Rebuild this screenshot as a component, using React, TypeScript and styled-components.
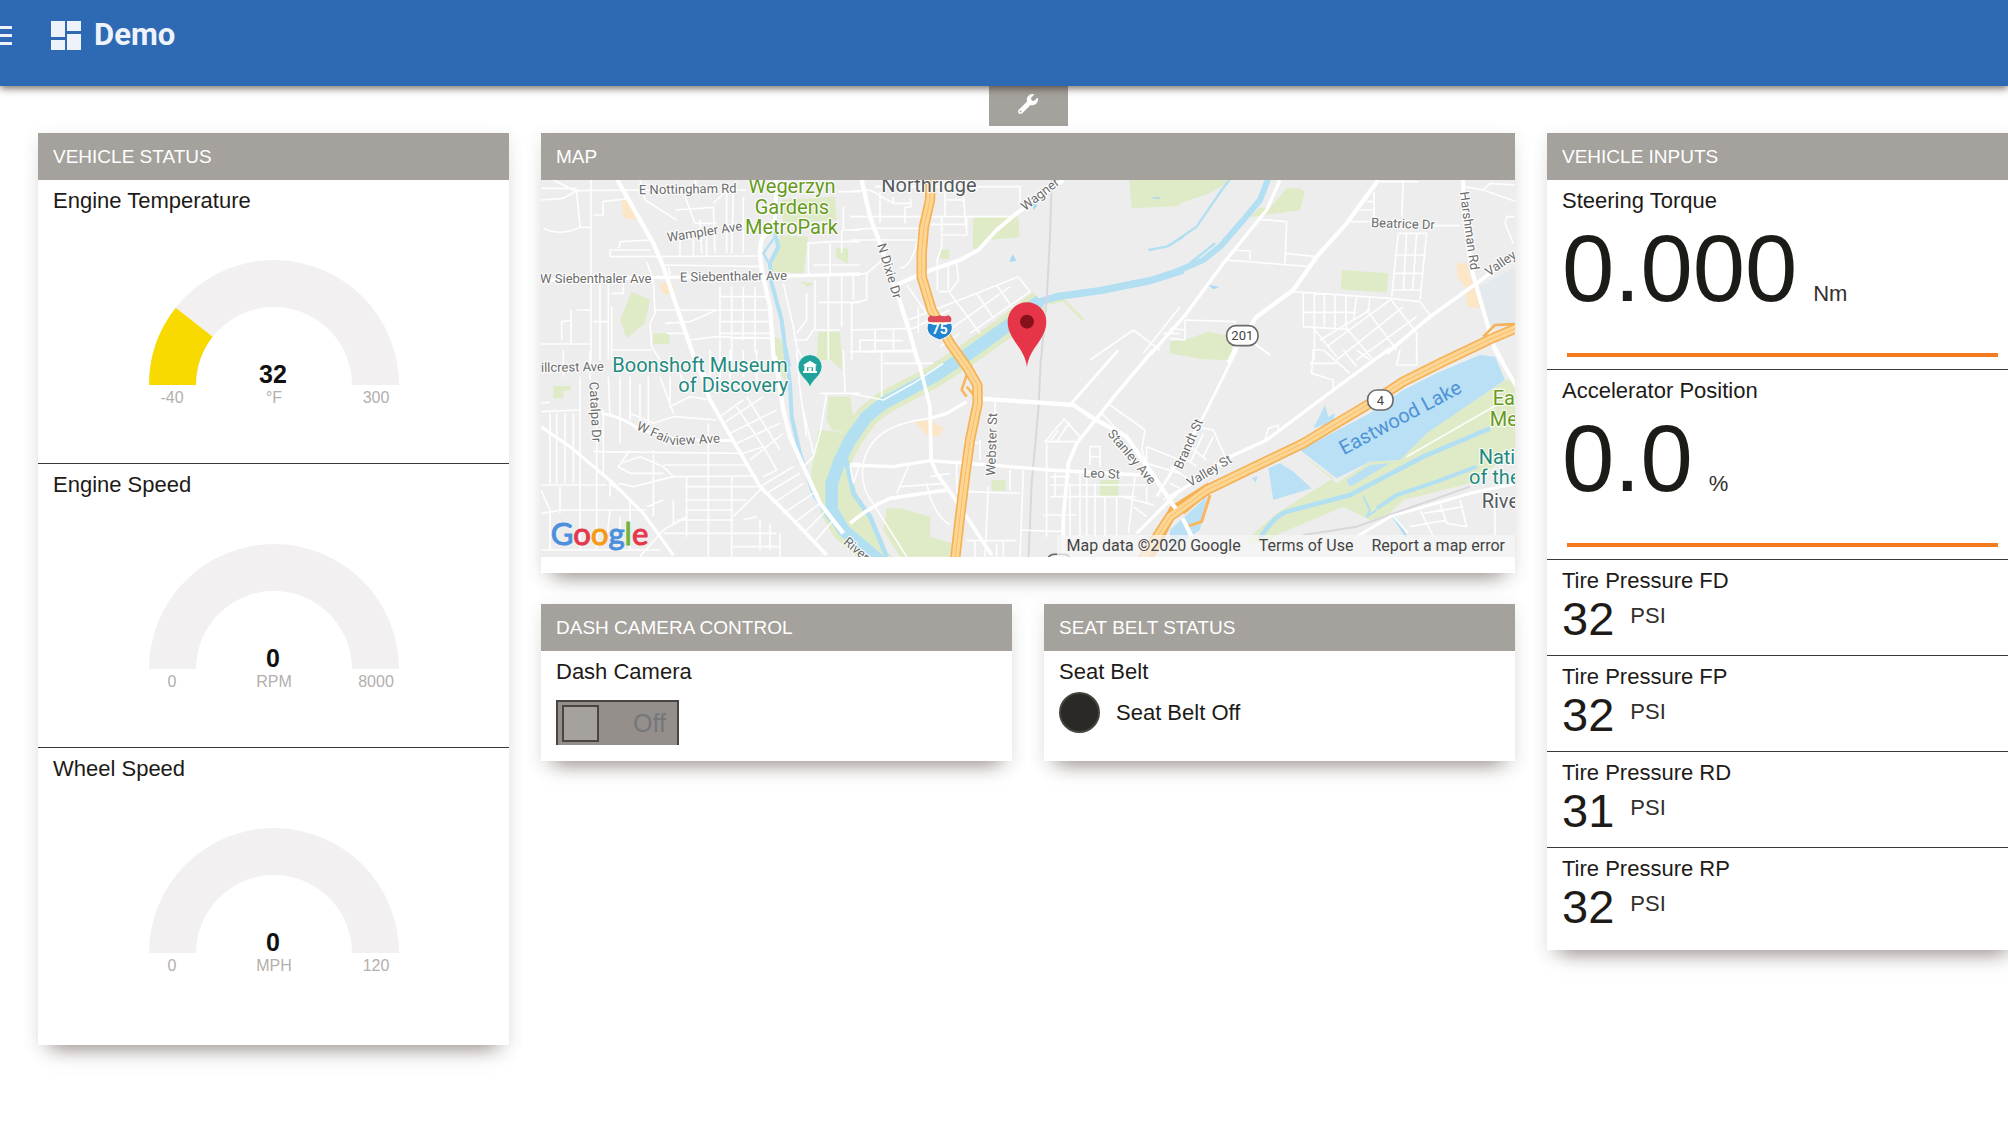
import React, { useId, useState } from "react";
import styled, { createGlobalStyle } from "styled-components";
import { FaWrench } from "react-icons/fa";

const sans = '"Liberation Sans", Arial, Helvetica, sans-serif';
const roboto = 'Roboto, "Liberation Sans", sans-serif';

const GlobalStyle = createGlobalStyle`
  *, *::before, *::after { box-sizing: border-box; }
  body {
    margin: 0;
    background: #fff;
    color: #1d1b18;
    font-family: ${sans};
    overflow-x: hidden;
  }
`;

const Page = styled.div`
  min-height: 100vh;
  overflow: hidden;
`;

const TopBar = styled.header`
  position: relative;
  z-index: 1;
  display: flex;
  align-items: flex-start;
  height: 86px;
  padding-top: 16px;
  background: #2e6ab3;
  box-shadow: 0 2px 8px rgba(60, 45, 35, 0.75);
`;

const MenuButton = styled.button`
  display: block;
  width: 38px;
  height: 38px;
  margin: 0 29px 0 -21px;
  padding: 0;
  border: 0;
  background: none;
  color: #eef3fb;
`;

const Brand = styled.h1`
  display: flex;
  align-items: center;
  gap: 8px;
  height: 38px;
  margin: 0;
  color: #eef3fb;
  font: 700 31px/40px ${roboto};
`;

const SettingsTab = styled.button`
  display: flex;
  align-items: center;
  justify-content: center;
  width: 79px;
  height: 40px;
  margin: 0 auto 7px;
  padding: 0 0 4px;
  border: 0;
  background: #a5a19c;
  color: #fff;
  font-size: 20px;
`;

const Board = styled.main`
  display: flex;
  flex-direction: column;
  margin: 0 -10px 0 38px;
`;

const Grid = styled.div`
  display: grid;
  grid-template-columns: repeat(4, 1fr);
  gap: 32px;
  align-items: start;
`;

const Middle = styled.div`
  grid-column: span 2;
  display: grid;
  grid-template-columns: repeat(2, 1fr);
  gap: 31px 32px;
`;

const CardBox = styled.section<{ $wide?: boolean }>`
  grid-column: ${(p) => (p.$wide ? "1 / -1" : "auto")};
  min-width: 0;
  padding-bottom: 16px;
  background: #fff;
  box-shadow: 0 18px 18px -14px rgba(80, 62, 55, 0.5), 0 4px 16px rgba(60, 50, 45, 0.12);
`;

const CardTitle = styled.h2`
  height: 47px;
  margin: 0;
  padding: 0 15px;
  background: #a5a19c;
  color: #fff;
  font: 400 19px/47px ${sans};
  text-transform: uppercase;
`;

const Row = styled.div<{ $height: number }>`
  display: flex;
  flex-direction: column;
  min-height: ${(p) => p.$height}px;
  padding: 8px 15px 0;
  border-bottom: 1px solid #3d3835;

  &:last-child {
    min-height: 0;
    border-bottom: 0;
  }
`;

const RowLabel = styled.div`
  font-size: 22px;
  line-height: 26px;
  white-space: nowrap;
`;

const GaugeSvg = styled.svg`
  display: block;
  align-self: center;
  width: 252px;
  height: 160px;
  margin: 45px 0 42px;
`;

const GaugeValue = styled.text`
  fill: #111;
  font: 700 25px ${sans};
  text-anchor: middle;
`;

const GaugeNote = styled.text`
  fill: #b3afad;
  font: 400 16px ${sans};
  text-anchor: middle;
`;

const Reading = styled.div<{ $big?: boolean }>`
  display: flex;
  align-items: baseline;
  gap: 16px;
  margin-bottom: 2px;
  font-size: ${(p) => (p.$big ? 94 : 47)}px;
  line-height: ${(p) => (p.$big ? 110 : 50)}px;
`;

const Unit = styled.span<{ $raised?: boolean }>`
  align-self: ${(p) => (p.$raised ? "flex-start" : "baseline")};
  color: #33302d;
  font-size: 22px;
  line-height: ${(p) => (p.$raised ? 44 : 26)}px;
`;

const Trend = styled.svg`
  display: block;
  width: calc(100% - 10px);
  height: 4px;
  margin: 27px 5px 0;
`;

const MapFrame = styled.div`
  position: relative;
  height: 377px;
  overflow: hidden;
  background: #ededed;
`;

const MapSvg = styled.svg`
  display: block;
  width: 100%;
  height: 100%;
  font-family: ${roboto};
`;

const MapText = styled.text<{ $size: number; $color: string }>`
  fill: ${(p) => p.$color};
  font-size: ${(p) => p.$size}px;
  stroke: rgba(255, 255, 255, 0.85);
  stroke-width: 7px;
  stroke-linejoin: round;
  paint-order: stroke;
`;

const LogoText = styled.text`
  font: 400 93px Lato, sans-serif;
  stroke-width: 3px;
`;

const Attribution = styled.div`
  position: absolute;
  right: 0;
  bottom: 0;
  display: flex;
  gap: 18px;
  padding: 0 10px 0 9px;
  background: rgba(245, 245, 245, 0.75);
  color: #444;
  font: 400 16px/22px ${roboto};

  a { color: inherit; text-decoration: none; }
`;

const SwitchLabel = styled.label`
  display: flex;
  align-items: center;
  justify-content: space-between;
  width: 123px;
  height: 45px;
  margin-top: 15px;
  padding: 0 11px 0 4px;
  border: 2px solid #4b4542;
  border-bottom: 0;
  background: #948f8a;
  color: #74777a;
  font-size: 25px;
`;

const SwitchKnob = styled.input`
  appearance: none;
  width: 37px;
  height: 37px;
  margin: 0;
  border: 2px solid #4b4542;
  background: #a5a19c;
`;

const Indicator = styled.div`
  display: flex;
  align-items: center;
  gap: 16px;
  margin-top: 7px;
  font-size: 22px;
  line-height: 26px;
`;

const Lamp = styled.span`
  width: 41px;
  height: 41px;
  border: 2px solid #46443f;
  border-radius: 50%;
  background: #2a2925;
`;

function Card({ title, wide, children }: { title: string; wide?: boolean; children: React.ReactNode }) {
  return (
    <CardBox $wide={wide}>
      <CardTitle>{title}</CardTitle>
      <div>{children}</div>
    </CardBox>
  );
}

function arc(from: number, to: number) {
  const point = (r: number, t: number) => {
    const a = Math.PI * (1 - t);
    return `${126 + r * Math.cos(a)} ${126 - r * Math.sin(a)}`;
  };
  return `M${point(125, from)} A125 125 0 0 1 ${point(125, to)} L${point(78, to)} A78 78 0 0 0 ${point(78, from)} Z`;
}

function Gauge({ label, value, min, max, unit }: { label: string; value: number; min: number; max: number; unit: string }) {
  const share = (value - min) / (max - min);
  return (
    <Row $height={284}>
      <RowLabel>{label}</RowLabel>
      <GaugeSvg viewBox="0 0 252 160">
        <path d={arc(0, 1)} fill="#f2f0f1" />
        {share > 0 && <path d={arc(0, share)} fill="#f8da00" />}
        <GaugeValue x="125" y="124">{value}</GaugeValue>
        <GaugeNote x="24" y="144">{min}</GaugeNote>
        <GaugeNote x="126" y="144">{unit}</GaugeNote>
        <GaugeNote x="228" y="144">{max}</GaugeNote>
      </GaugeSvg>
    </Row>
  );
}

function TrendReading({ label, value, unit }: { label: string; value: string; unit: string }) {
  return (
    <Row $height={190}>
      <RowLabel>{label}</RowLabel>
      <Reading $big>
        {value}
        <Unit>{unit}</Unit>
      </Reading>
      <Trend viewBox="0 0 100 4" preserveAspectRatio="none">
        <path d="M0 2H100" stroke="#f47a20" strokeWidth="4" />
      </Trend>
    </Row>
  );
}

/* Map artwork is drawn at three units per pixel, split into six tiles. */
type Tile = {
  x: number;
  y: number;
  green?: string;
  commercial?: string;
  lake?: string;
  streams?: [string, number][];
  rail?: string;
  minor: string;
  major: [string, number][];
};

const tiles: Tile[] = [
  {
    x: -33,
    y: -180,
    green:
      "M750 240L915 230L920 300L760 310Z M750 345L835 350L820 460L720 455L740 400Z M305 515L360 540L345 610L290 655L270 600Z M370 640H418V672H370Z M918 385H955L953 432L918 412Z M810 485L850 490L835 502Z M865 635H930L935 720H860Z M735 650L755 660L770 720H735Z",
    commercial: "M275 235L300 240L330 290L315 300L278 295Z M392 490L425 485L435 510L410 525L392 515Z",
    streams: [["M742 180L735 340L745 380L720 430L725 490L755 600L765 680L778 740", 12], ["M735 350L700 400L722 440", 7]],
    minor:
      "M33 240L100 235L140 212L330 210H650 M70 180L140 215L150 320 M40 325Q90 350 150 322H183 M183 180V720 M33 205H140 M190 285H220L218 245L300 235 M240 410V390H360 M240 410L700 408 M265 385L272 365L360 360 M400 435L700 440 M420 465L415 440 M435 270L550 262L555 400 M465 230L495 310H560 M510 300L515 400 M590 210V400 M610 220L605 400 M640 230V400 M450 350V405 M490 360V405 M530 350V405 M350 425L370 480L375 580L360 610L365 680L390 720 M375 570L720 570 M405 610L480 605L560 570 M570 500V720 M605 500V720 M640 500V660 M675 500V700 M570 530H715 M570 605H720 M570 640H725 M480 660L560 650L725 655 M95 660V605L125 600 M123 570V670 M140 570H183 M33 672H183 M210 490V720 M235 490V720 M190 605H235 M245 520H280V490 M245 560V720 M245 690H365 M410 640H470 M760 490L790 620L800 680L820 720 M830 520V600L800 640 M855 480V630 M895 470V720 M935 470V620 M865 547H990 M830 370L900 365H990 M835 370V470 M850 435H990 M900 370V460 M935 330V400 M970 290H990 M940 260V330H990 M925 215H990 M790 660H830L850 630H930 M965 550V720 M495 180L500 200 M330 180L345 240L440 300 M550 250L590 210",
    major: [["M262 180L370 370L400 440L440 560L495 720", 13], ["M740 180L735 300L700 350Q688 370 690 410L695 450L720 560L732 730", 13], ["M33 482L380 472L700 470L990 462", 10]],
  },
  {
    x: 927,
    y: -180,
    green: "M370 290H505L508 352L410 360L385 388H368Z M268 388H298V418L268 415Z M838 180H990V258L845 265Z",
    streams: [["M895 390L950 380L1000 350", 7], ["M1000 450L900 482L750 512L620 530L560 548", 22]],
    rail: "M605 180L600 350L590 540L573 720",
    minor:
      "M0 215L60 210L130 250 M75 200H510V250 M0 290H480 M0 330L60 325H210 M0 360H200 M180 235L185 260L165 262V310 M90 215V310 M130 230V250H180 M275 290V380L262 420V510 M220 313H350 M350 290V345H275 M340 230L350 340 M285 200V290 M285 240H340 M320 430L325 480L300 515H265 M295 430V510 M150 445Q190 440 210 330 M0 465L50 460L110 410 M50 460V540L0 550 M10 465V540 M175 600L380 520L505 470L540 515L360 640 M380 520L430 595 M300 520L390 640 M440 495L485 560 M190 625L300 570 M270 650L480 500 M270 680L330 640 M0 630L190 625 M30 660L160 662 M30 695L190 690 M75 630V700 M30 660V695 M130 630V690 M720 720L850 630L930 690 M990 560L880 700 M940 640H990 M205 560V640 M170 495L230 580",
    major: [["M35 180L60 290L90 370L145 530L180 640L205 730", 13], ["M640 180L500 280L440 330L385 390L330 420L215 460L130 500", 12]],
  },
  {
    x: 1887,
    y: -180,
    green:
      "M0 180H185L120 220L0 260Z M350 205H390L405 215L390 270L240 292L270 262L300 265Z M515 450L655 460L650 518L513 508Z M0 665L60 655L115 635L190 650L180 720L100 718L0 700Z",
    commercial: "M860 430H890L905 480L935 540L930 565L890 560L885 500L862 470Z",
    streams: [["M295 175L270 240L220 300L150 380L100 420L-5 465", 18], ["M178 180L155 210L80 320L-5 378", 7], ["M135 370L60 430", 8]],
    minor:
      "M270 298L350 305L345 430 M345 400L440 410 M170 420L420 440 M190 390L240 393V420 M540 305H605 M790 317H870 M570 270H612V215 M590 245H612 M612 270V300 M700 180L695 290 M630 185H745 M685 340H770L750 540 M685 340L665 530 M710 340L700 510 M740 340L728 510 M675 405H765 M670 460H758 M668 510H750 M370 515L660 535L750 545 M400 520V620L530 628 M433 520V720 M463 525V625 M495 525V625 M528 528V625 M560 530L550 600 M400 577H560 M600 530L595 570 M450 660L600 570 M470 680L660 540 M500 720L700 560 M560 720L740 590 M430 625L500 710 M530 625L610 720 M590 570L680 690 M660 535L740 640 M750 545L780 585 M740 640V720 M425 690H460 M45 600L200 605 M45 600V660L0 655 M0 625L45 630 M880 200L940 210L1040 245 M940 210L960 190L1034 195 M1034 290H1010L1005 310L1030 370 M240 660L300 705",
    major: [["M625 180L530 310L440 410L370 510L260 590L200 680L175 730", 13], ["M330 180L290 270L160 430L50 580L-60 705", 10], ["M1040 400L920 490L780 590L650 700", 11]],
  },
  {
    x: -33,
    y: 510,
    green:
      "M895 140H960L970 200L945 245L905 240L890 210Z M865 240L930 245L890 480L840 390Z M740 0H760L770 100L745 60Z M885 0H935V60L890 20Z M70 108H122V122H100V145H70Z",
    streams: [["M765 0L780 100L785 200L810 310L850 430L900 510L990 580", 12]],
    minor:
      "M33 185L150 180 M33 158H60 M150 80V600 M33 405H230 M60 190V400 M80 190V400 M105 190V400 M130 190V400 M200 180V600 M220 180V380 M190 305L640 310 M235 80L240 200 M270 80V280 M300 80V210 M330 100V240 M355 80V240 M420 80V170L480 140L540 150 M390 80L430 190 M450 70L470 130 M300 190L370 220L430 200L560 210 M510 60L545 90 M370 300V500 M270 340L330 320L400 350L430 380L310 410L265 400 M300 300L265 350L300 370H400 M470 380V560 M535 220V620 M605 380V620 M430 380L680 378 M400 345H650 M465 410H690 M465 450H650 M465 480H610 M440 510H610 M400 550H740 M610 500L700 410 M610 590H750 M330 620L400 540L470 500 M570 200L640 150 M580 220L700 140 M600 250L740 180 M620 280L750 220 M640 310L700 290L740 360L700 380 M660 330L760 250 M690 410L790 350 M710 430L810 370 M730 460L820 400 M760 490L850 430 M790 520L870 460 M820 550L890 480 M850 580L910 510 M620 170L700 290 M650 140L750 300 M240 440V400L265 420 M90 410V490 M33 490L100 480H350 M270 500V600 M300 450V600 M33 600H390 M240 480L230 570 M430 450V520 M400 450L350 470 M33 420L60 480V600 M690 510V600 M720 520V600 M750 550V620 M640 510L680 500 M890 130L870 250L850 320L820 350 M870 130H990 M820 180L850 310 M800 0L810 120L830 260 M940 0L945 130 M680 0V90 M640 0V80 M600 0V90 M570 0V90 M540 0V90 M100 0V80 M180 0V90 M965 340H990L970 400",
    major: [["M495 20L540 150L620 290L690 410L790 510L890 615", 11], ["M735 20L760 180L780 260L830 370L870 460L940 550", 13], ["M33 230L120 290L250 400L340 490L430 615", 9], ["M215 190Q280 200 330 240L450 270L610 272", 8]],
  },
  {
    x: 927,
    y: 510,
    green:
      "M110 475H150L240 500V560L305 580L300 620H150L100 540Z M-30 300L0 360L30 460L100 570L60 600L-10 540L-30 450Z M425 390H467V422H425Z M750 390H805V440H750Z",
    commercial: "M190 215L240 210L280 235L270 258L230 255Z",
    streams: [["M-12 330L10 430L60 500L110 620", 14]],
    rail: "M573 20L565 180L545 400L535 640",
    minor:
      "M0 130L100 150L190 100L280 40 M95 0V140 M0 5H200 M100 40H250 M240 205Q100 220 60 290Q20 350 50 430L170 620 M435 150V230 M415 410L405 620 M390 270V330 M340 275L385 280 M350 425L510 430 M520 360L510 620 M350 572H500 M480 360V420 M440 580V620 M375 575V620 M460 575V620 M510 540L640 545 M590 370V560 M615 370V440 M690 370V560 M710 370V560 M735 400V560 M765 440V560 M800 440V560 M660 400V560 M855 380L835 550 M890 410V460 M600 405H890 M600 440H860 M580 495H680 M600 380H660 M820 440L910 465 M850 470L890 500 M640 210L585 275H680 M625 240L600 275 M660 215L620 275 M640 205L690 260 M590 280V370 M755 190L860 300 M780 165L885 240L875 300L890 340 M890 290L990 330 M890 290V340L990 370 M720 345V290H750V350 M720 320H750 M990 420L940 450 M140 430L175 350 M230 400L240 440Q260 500 300 525 M150 410L290 400 M320 340V430 M240 380L300 370 M0 345L10 400",
    major: [["M205 30L240 170L243 330L260 370L310 440L425 615", 11], ["M0 520Q60 470 120 445L290 420", 11], ["M240 205L290 190L350 155", 10], ["M390 146L560 157L670 165L730 205L830 260L960 450", 13], ["M0 345L130 350L240 332L420 345L600 360L870 375", 10], ["M910 0L800 130L680 280L655 340L640 500V620", 11], ["M805 0L660 165", 8], ["M990 420L860 550", 10]],
  },
  {
    x: 1887,
    y: 510,
    green:
      "M390 310L490 385L320 490L240 560L230 580H290L330 550L520 470L600 510L650 500L700 450L900 400L1040 300V80L1010 90L770 240L690 330L600 335L500 400Z M0 0H190L175 28L100 18L0 8Z",
    lake:
      "M390 300L500 385L600 335L690 330L770 250L1005 90L975 20L930 15L800 70L700 120L600 190Z M295 355L330 340L370 365L425 415L310 450Z M440 215L465 165L475 200L495 190L490 215L430 235Z M530 390L600 345L660 340L540 410Z M245 385L262 378L258 398Z M0 540L110 440L90 540L0 600Z",
    streams: [["M270 565Q310 500 350 485L540 435L760 320L960 235", 14], ["M620 475L680 435L800 395L920 350", 12], ["M580 440L600 480L590 500L620 480", 6], ["M670 500L710 560", 8]],
    rail: "M400 555L560 530L700 480L900 410",
    minor:
      "M710 320L980 165 M670 500L715 550 M750 480L790 560 M810 460L830 520L890 530L870 450 M720 530L830 510 M760 490L880 470 M975 430V555 M430 0L425 70L490 90V120 M460 0L540 70 M420 40H500 M520 0L560 50 M560 0L600 30 M285 270L295 235L325 225V245 M740 0V45H680L690 0 M80 230L130 240L165 320 M60 290L110 330 M100 250L60 340 M130 260L100 320 M40 320L80 350 M0 350L60 390 M0 400L30 415 M240 -30L300 15",
    major: [["M200 0L95 210L20 340L-40 440", 8], ["M660 -5L490 120L290 270L180 320L50 410L0 440", 10], ["M560 560L660 500L900 430L1040 400", 9], ["M880 -510L880 -430L905 -240L925 -170L975 0L1040 110", 12]],
  },
];

type Label = { t: string; x: number; y: number; a?: number; k?: "park" | "museum" | "town" | "lake" };

const labels: Label[] = [
  { t: "E Nottingham Rd", x: 294, y: 43, a: -1 },
  { t: "Wampler Ave", x: 380, y: 186, a: -9 },
  { t: "W Siebenthaler Ave", x: -3, y: 308 },
  { t: "E Siebenthaler Ave", x: 417, y: 305, a: -1 },
  { t: "Wagner", x: 1453, y: 94, a: -38 },
  { t: "N Dixie Dr", x: 1008, y: 195, a: 73 },
  { t: "Beatrice Dr", x: 2490, y: 141, a: 2 },
  { t: "Harshman Rd", x: 2756, y: 37, a: 82 },
  { t: "Valley St", x: 2844, y: 290, a: -35 },
  { t: "illcrest Ave", x: 0, y: 576, a: -1 },
  { t: "Catalpa Dr", x: 145, y: 606, a: 87 },
  { t: "W Fair", x: 284, y: 748, a: 24 },
  { t: "view Ave", x: 386, y: 796, a: -3 },
  { t: "River", x: 905, y: 1090, a: 40 },
  { t: "Webster St", x: 1362, y: 888, a: -88 },
  { t: "Stanley Ave", x: 1698, y: 762, a: 50 },
  { t: "Leo St", x: 1627, y: 892, a: 2 },
  { t: "Brandt St", x: 1922, y: 870, a: -66 },
  { t: "Valley St", x: 1948, y: 922, a: -31 },
  { t: "Wegerzyn", x: 622, y: 40, k: "park" },
  { t: "Gardens", x: 641, y: 102, k: "park" },
  { t: "MetroPark", x: 612, y: 163, k: "park" },
  { t: "Ea", x: 2855, y: 676, k: "park" },
  { t: "Me", x: 2846, y: 738, k: "park" },
  { t: "Northridge", x: 1021, y: 36, k: "town" },
  { t: "Rive", x: 2822, y: 983, k: "town" },
  { t: "Boonshoft Museum", x: 214, y: 576, k: "museum" },
  { t: "of Discovery", x: 412, y: 635, k: "museum" },
  { t: "Nati", x: 2813, y: 851, k: "museum" },
  { t: "of the", x: 2784, y: 912, k: "museum" },
  { t: "Eastwood Lake", x: 2408, y: 826, a: -28, k: "lake" },
];

const labelColors = { park: "#689a1c", museum: "#1f8a80", town: "#555a5e", lake: "#4f93d6" };

const interstate =
  "M242 180L240 240L222 320L215 400L215 470L245 570L300 670L350 740L382 795L383 850L360 960L345 1070L330 1190L315 1320";
const route4 = "M-90 640L0 500L110 420L400 280L600 160L700 95L820 35L960 -32L1040 -66";
const river = "M570 -148L470 -70L350 15L250 80L100 160L50 200L0 270L-30 330L-55 400L-55 480L-20 540L110 650";

function VehicleMap() {
  return (
    <MapSvg viewBox="0 0 2922 1131" preserveAspectRatio="xMidYMid slice" fill="none" strokeLinejoin="round">
      <rect width="2922" height="1131" fill="#ededed" />
      <path d="M2817 320L2922 260V430L2847 450Z" fill="#e4e9ee" />
      {tiles.map((t, i) => (
        <g key={i} transform={`translate(${t.x} ${t.y})`}>
          <path d={t.green} fill="#deebc6" />
          <path d={t.commercial} fill="#fbe6c8" />
        </g>
      ))}
      <g transform="translate(927 510)">
        <path d={river} stroke="#deebc6" strokeWidth="68" />
        <path d="M-40 310L-70 400L-20 480" stroke="#deebc6" strokeWidth="70" />
        <path d={river} stroke="#b3dff3" strokeWidth="38" />
        <path d="M600 -140L640 -150L700 -90" stroke="#deebc6" strokeWidth="8" />
      </g>
      {tiles.map((t, i) => (
        <g key={i} transform={`translate(${t.x} ${t.y})`}>
          <path d={t.lake} fill="#b9e0f4" />
          {t.streams?.map(([d, w]) => <path key={d} d={d} stroke="#b3dff3" strokeWidth={w} />)}
          <path d={t.rail} stroke="#d8d8dc" strokeWidth="6" />
          <path d={t.minor} stroke="#fff" strokeOpacity="0.9" strokeWidth="5" />
        </g>
      ))}
      {tiles.map((t, i) => (
        <g key={i} transform={`translate(${t.x} ${t.y})`}>
          {t.major.map(([d, w]) => <path key={d} d={d} stroke="#fff" strokeWidth={w} />)}
        </g>
      ))}
      <g transform="translate(927 -180)">
        <path d="M350 765L335 810L350 830M385 840L350 800" stroke="#f7b860" strokeWidth="8" />
        <path d={interstate} stroke="#f5b155" strokeWidth="31" />
        <path d={interstate} stroke="#fdd694" strokeWidth="21" />
        <path d={interstate} stroke="#f8bd68" strokeWidth="3" />
      </g>
      <g transform="translate(1887 510)">
        <path d="M120 435L95 515L50 530M110 430L40 490" stroke="#f7b860" strokeWidth="9" />
        <path d="M-70 640L10 480L120 410" stroke="#f5b155" strokeWidth="28" />
        <path d="M940 -40L975 -75L1040 -78" stroke="#f5b155" strokeWidth="8" />
        <path d={route4} stroke="#f5b155" strokeWidth="31" />
        <path d={route4} stroke="#fdd694" strokeWidth="21" />
        <path d={route4} stroke="#f8bd68" strokeWidth="3" />
        <path d="M0 455L18 475M38 505L65 560M975 -5L1000 40" stroke="#fff" strokeWidth="13" />
      </g>
      <path d="M1472 66L1490 76L1478 90ZM1405 245L1415 222L1426 243ZM2002 315L2035 320L2018 328ZM1835 52H1857V56H1835Z" fill="#a9d8f2" />

      {labels.map((l) => (
        <MapText
          key={l.t + l.x}
          $size={l.k ? 60 : 39}
          $color={l.k ? labelColors[l.k] : "#6c6c6c"}
          transform={`translate(${l.x} ${l.y}) rotate(${l.a ?? 0})`}
          strokeOpacity={l.k === "lake" ? 0 : 1}
        >
          {l.t}
        </MapText>
      ))}

      <g transform="translate(1196 446)">
        <path d="M-36 -16C-42 8 -34 22 0 34C34 22 42 8 36 -16Z" fill="#1f86cf" stroke="#fff" strokeWidth="3" />
        <path d="M-33 -20C-38 -30 -34 -36 -26 -40Q-14 -34 0 -40Q14 -34 26 -40C34 -36 38 -30 33 -20Z" fill="#dd4a5a" />
        <text y="17" textAnchor="middle" fill="#fff" fontSize="42" fontWeight="700">75</text>
      </g>
      <g stroke="#6b6b6b" strokeWidth="5" fill="#fff">
        <rect x="2057" y="437" width="94" height="60" rx="28" />
        <rect x="2480" y="630" width="76" height="60" rx="28" />
        <rect x="1520" y="1123" width="68" height="40" rx="18" />
      </g>
      <g fill="#444" fontSize="39" textAnchor="middle">
        <text x="2104" y="481">201</text>
        <text x="2518" y="674">4</text>
      </g>

      <g transform="translate(807 562)">
        <path d="M0 62C-4 38 -36 26 -36 -2A36 36 0 0 1 36 -2C36 26 4 38 0 62Z" fill="#1fa39a" stroke="#fff" strokeWidth="2" />
        <path d="M-22 -6L0 -20L22 -6ZM-17 -3H-9V13H-17ZM9 -3H17V13H9ZM-21 11H21V17H-21ZM-5 1H5V13H-5ZM-17 -6H17V0H-17Z" fill="#fff" />
      </g>
      <g transform="translate(1458 425)">
        <path d="M0 137C-6 78 -58 54 -58 0A58 58 0 0 1 58 0C58 54 6 78 0 137Z" fill="#e63548" />
        <circle r="21" fill="#87111a" />
      </g>

      <LogoText x="29" y="1096">
        <tspan fill="#4a90dd" stroke="#4a90dd">G</tspan>
        <tspan fill="#e5384c" stroke="#e5384c">o</tspan>
        <tspan fill="#f59a12" stroke="#f59a12">o</tspan>
        <tspan fill="#4a90dd" stroke="#4a90dd">g</tspan>
        <tspan fill="#6fb43f" stroke="#6fb43f">l</tspan>
        <tspan fill="#e5384c" stroke="#e5384c">e</tspan>
      </LogoText>
    </MapSvg>
  );
}

function CameraSwitch() {
  const id = useId();
  const [on, setOn] = useState(false);
  return (
    <SwitchLabel htmlFor={id}>
      <SwitchKnob id={id} type="checkbox" checked={on} onChange={(e) => setOn(e.target.checked)} />
      {on ? "On" : "Off"}
    </SwitchLabel>
  );
}

const tires = [
  { label: "Tire Pressure FD", value: 32 },
  { label: "Tire Pressure FP", value: 32 },
  { label: "Tire Pressure RD", value: 31 },
  { label: "Tire Pressure RP", value: 32 },
];

export default function App() {
  return (
    <Page>
      <GlobalStyle />
      <TopBar>
        <MenuButton aria-label="Menu">
          <svg width="38" height="38" viewBox="0 0 38 38" fill="currentColor">
            <path d="M5 10H33V13H5ZM5 18H33V21H5ZM5 26H33V29H5Z" />
          </svg>
        </MenuButton>
        <Brand>
          <svg width="40" height="38" viewBox="0 0 40 38" fill="currentColor">
            <path d="M5 5H19V21H5ZM5 24H19V34H5ZM21 5H35V15H21ZM21 18H35V34H21Z" />
          </svg>
          Demo
        </Brand>
      </TopBar>
      <Board>
        <SettingsTab aria-label="Settings">
          <FaWrench />
        </SettingsTab>
        <Grid>
          <Card title="Vehicle Status">
            <Gauge label="Engine Temperature" value={32} min={-40} max={300} unit="°F" />
            <Gauge label="Engine Speed" value={0} min={0} max={8000} unit="RPM" />
            <Gauge label="Wheel Speed" value={0} min={0} max={120} unit="MPH" />
          </Card>
          <Middle>
            <Card title="Map" wide>
              <MapFrame>
                <VehicleMap />
                <Attribution>
                  <span>Map data ©2020 Google</span>
                  <a href="#terms">Terms of Use</a>
                  <a href="#report">Report a map error</a>
                </Attribution>
              </MapFrame>
            </Card>
            <Card title="Dash Camera Control">
              <Row $height={100}>
                <RowLabel>Dash Camera</RowLabel>
                <CameraSwitch />
              </Row>
            </Card>
            <Card title="Seat Belt Status">
              <Row $height={100}>
                <RowLabel>Seat Belt</RowLabel>
                <Indicator>
                  <Lamp />
                  Seat Belt Off
                </Indicator>
              </Row>
            </Card>
          </Middle>
          <Card title="Vehicle Inputs">
            <TrendReading label="Steering Torque" value="0.000" unit="Nm" />
            <TrendReading label="Accelerator Position" value="0.0" unit="%" />
            {tires.map((t) => (
              <Row key={t.label} $height={96}>
                <RowLabel>{t.label}</RowLabel>
                <Reading>
                  {t.value}
                  <Unit $raised>PSI</Unit>
                </Reading>
              </Row>
            ))}
          </Card>
        </Grid>
      </Board>
    </Page>
  );
}
